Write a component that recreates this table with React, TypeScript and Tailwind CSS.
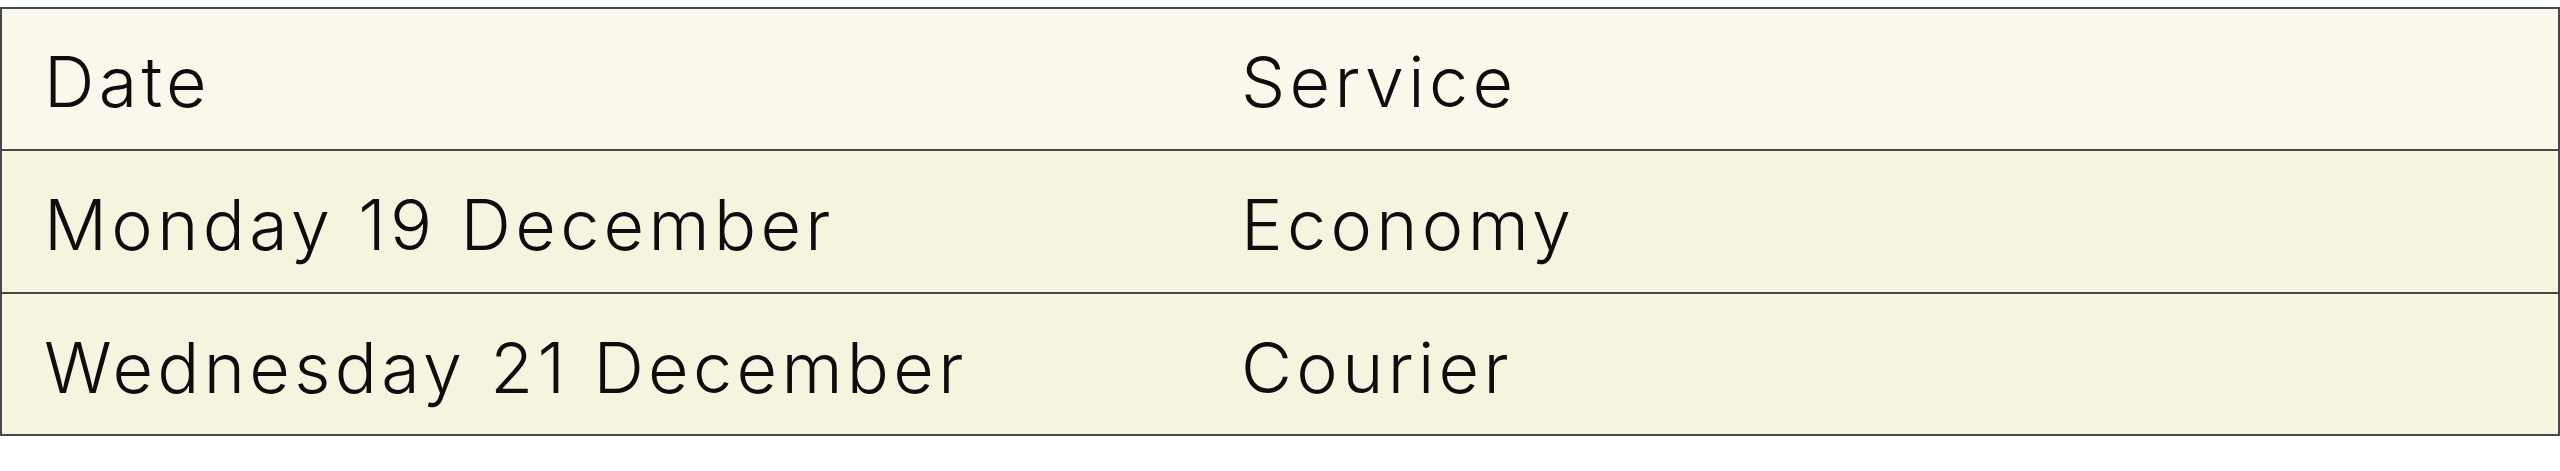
import React from "react";

const rows = [
  ["Monday 19 December", "Economy"],
  ["Wednesday 21 December", "Courier"],
];

export default function App() {
  return (
    <div className="w-[2560px] bg-white pt-[7px] pb-[35px]" style={{ fontFamily: "Inter, 'Liberation Sans', sans-serif" }}>
      <div className="border-2 border-[#45484b] text-[#0d0d0d]">
        <div className="grid h-[142px] grid-cols-[1197px_1fr] items-center border-b-2 border-[#45484b] bg-[#fbf7eb] text-[70px] font-light leading-none tracking-[0.062em]">
          <div className="pl-[42px] pt-[6px]">Date</div>
          <div className="pl-[42px] pt-[6px]">Service</div>
        </div>
        {rows.map((r, i) => (
          <div
            key={i}
            className={
              "grid grid-cols-[1197px_1fr] items-center bg-[#f6f4df] text-[70px] font-light leading-none tracking-[0.062em]" +
              (i < rows.length - 1 ? " h-[143px] border-b-2 border-[#45484b]" : " h-[140px]")
            }
          >
            <div className="pl-[42px] pt-[7px]">{r[0]}</div>
            <div className="pl-[42px] pt-[7px]">{r[1]}</div>
          </div>
        ))}
      </div>
    </div>
  );
}
